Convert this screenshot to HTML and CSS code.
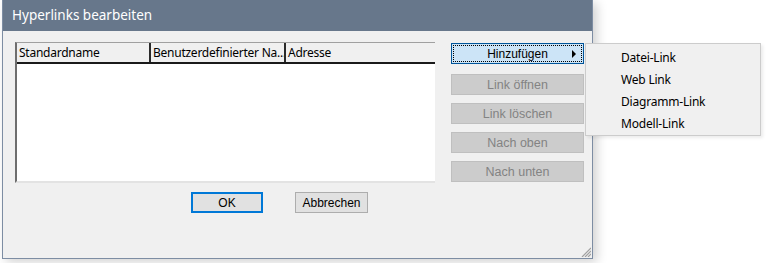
FILE: index.html
```html
<!DOCTYPE html>
<html lang="de">
<head>
  <meta charset="UTF-8" />
  <title>Hyperlinks bearbeiten</title>
  <link rel="stylesheet" href="styles.css">
</head>
<body>

  <div class="window">
    <div class="titlebar">Hyperlinks bearbeiten</div>
    <div class="content">
      <div class="main-row">
        <div class="listbox">
          <div class="list-header">
            <div class="col col-name">Standardname</div>
            <div class="col col-custom">Benutzerdefinierter Na...</div>
            <div class="col col-addr">Adresse</div>
          </div>
          <div class="list-body"></div>
        </div>
        <div class="side-buttons">
          <button class="btn btn-focus btn-menu"><span class="focus-ring">Hinzufügen<span class="arrow"></span></span></button>
          <button class="btn btn-disabled">Link öffnen</button>
          <button class="btn btn-disabled">Link löschen</button>
          <button class="btn btn-disabled">Nach oben</button>
          <button class="btn btn-disabled">Nach unten</button>
        </div>
      </div>
      <div class="footer">
        <button class="btn btn-default">OK</button>
        <button class="btn btn-normal">Abbrechen</button>
      </div>
    </div>
    <svg class="grip" width="10" height="10" viewBox="0 0 10 10">
      <path d="M10 1 L1 10 M10 4 L4 10 M10 7 L7 10" stroke="#a0a0a0" stroke-width="1.2" />
    </svg>
  </div>

  <ul class="popup-menu">
    <li>Datei-Link</li>
    <li>Web Link</li>
    <li>Diagramm-Link</li>
    <li>Modell-Link</li>
  </ul>

</body>
</html>
```

FILE: styles.css
```css
* {
  box-sizing: border-box;
}

body {
  margin: 0;
  background: #ffffff;
  font-family: 'Noto Sans', sans-serif;
  font-size: 12px;
  color: #000;
  height: 263px;
  overflow: hidden;
}

.window {
  position: relative;
  margin-left: 2px;
  width: 591px;
  height: 259px;
  background: #f0f0f0;
  border: 1px solid #7d8da3;
  border-top: none;
  box-shadow: 4px 3px 10px rgba(0, 0, 0, 0.18);
}

.titlebar {
  height: 31px;
  background: #67778b;
  color: #ffffff;
  font-size: 13.5px;
  line-height: 31px;
  padding-left: 9px;
}

.content {
  padding: 11px 7px 0 12px;
}

.main-row {
  display: flex;
}

.listbox {
  width: 420px;
  height: 141px;
  background: #ffffff;
  border-left: 2px solid #6e6e6e;
  border-top: 1px solid #a0a0a0;
  border-bottom: 2px solid #e3e3e3;
  display: flex;
  flex-direction: column;
}

.list-header {
  display: flex;
  height: 21px;
  background: #f0f0f0;
  border-bottom: 2px solid #1a1a1a;
  letter-spacing: -0.25px;
}

.col {
  padding-left: 2px;
  line-height: 19px;
  white-space: nowrap;
  overflow: hidden;
  border-right: 2px solid #2a2a2a;
}

.col-name {
  width: 134px;
}

.col-custom {
  width: 135px;
}

.col-addr {
  flex: 1;
  border-right: none;
}

.list-body {
  flex: 1;
}

.side-buttons {
  margin-left: 16px;
  display: flex;
  flex-direction: column;
  gap: 8px;
  padding-top: 1px;
}

.btn {
  font-family: 'Liberation Sans', sans-serif;
  font-size: 12px;
  height: 20px;
  padding: 0;
  margin: 0;
  cursor: default;
}

.side-buttons .btn {
  width: 133px;
  height: 21px;
}

.side-buttons .btn-menu {
  margin-bottom: 2px;
}

.btn-menu {
  background: #cce4f7;
  border: 1px solid #005499;
  padding: 1px;
}

.focus-ring {
  display: flex;
  align-items: center;
  justify-content: center;
  position: relative;
  height: 17px;
  border: 1px dotted #000;
  color: #000;
}

.arrow {
  position: absolute;
  right: 5px;
  top: 4px;
  width: 0;
  height: 0;
  border-top: 4px solid transparent;
  border-bottom: 4px solid transparent;
  border-left: 4px solid #000;
}

.btn-disabled {
  background: #cccccc;
  border: 1px solid #bfbfbf;
  color: #838383;
  font-size: 12.5px;
}

.footer {
  display: flex;
  gap: 32px;
  padding-left: 176px;
  margin-top: 9px;
}

.btn-default {
  width: 72px;
  height: 21px;
  background: #e1e1e1;
  border: 2px solid #0078d7;
}

.btn-normal {
  width: 73px;
  height: 21px;
  background: #e1e1e1;
  border: 1px solid #adadad;
}

.grip {
  position: absolute;
  right: 1px;
  bottom: 1px;
}

.popup-menu {
  position: absolute;
  left: 585px;
  top: 43px;
  width: 176px;
  height: 93px;
  margin: 0;
  padding: 3px 0 0 0;
  list-style: none;
  background: #f0f0f0;
  border: 1px solid #cccccc;
  box-shadow: 2px 2px 3px rgba(0, 0, 0, 0.08);
  letter-spacing: -0.2px;
}

.popup-menu li {
  height: 22px;
  line-height: 22px;
  padding-left: 35px;
}
```
